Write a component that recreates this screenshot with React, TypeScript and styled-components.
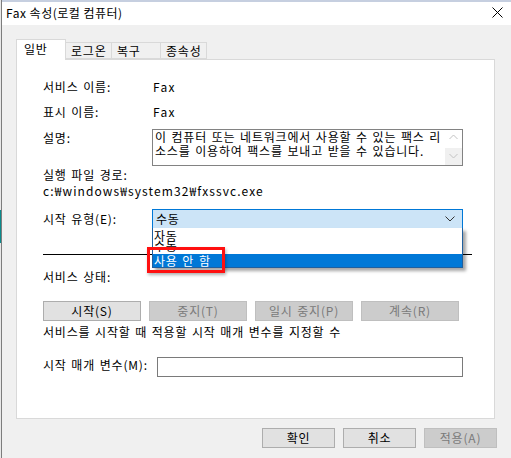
import React from "react";
import styled, { createGlobalStyle } from "styled-components";

const GlobalStyle = createGlobalStyle`
  html, body {
    margin: 0;
    padding: 0;
    background: #f0f0f0;
  }
  body {
    font-family: "Noto Sans CJK KR", "Noto Sans", sans-serif;
    font-size: 12px;
    letter-spacing: 0.8px;
    word-spacing: 1.2px;
    color: #000;
  }
`;

const font = `"Noto Sans CJK KR", "Noto Sans", sans-serif`;

export default function App() {
  return (
    <>
      <GlobalStyle />
      <Screen>
        <LeftEdge>
          <DesktopTeal />
        </LeftEdge>
        <Window>
          <TitleBar>
            <Title>Fax 속성(로컬 컴퓨터)</Title>
            <CloseButton aria-label="닫기">
              <svg width="11" height="11" viewBox="0 0 11 11">
                <path d="M0.5 0.5 L10.5 10.5 M10.5 0.5 L0.5 10.5" stroke="#000" strokeWidth="1" />
              </svg>
            </CloseButton>
          </TitleBar>

          <Body>
            <TabRow>
              <Tab $active $w={50}>일반</Tab>
              <Tab $w={46}>로그온</Tab>
              <Tab $w={49}>복구</Tab>
              <Tab $w={46}>종속성</Tab>
            </TabRow>

            <Panel>
              <FieldRow $top={20}>
                <Label>서비스 이름:</Label>
                <Value>Fax</Value>
              </FieldRow>
              <FieldRow $top={11}>
                <Label>표시 이름:</Label>
                <Value>Fax</Value>
              </FieldRow>
              <FieldRow $top={10} $start>
                <Label $offset={2}>설명:</Label>
                <DescBox>
                  <DescText>
                    이 컴퓨터 또는 네트워크에서 사용할 수 있는 팩스 리<br />
                    소스를 이용하여 팩스를 보내고 받을 수 있습니다.
                  </DescText>
                  <ScrollStrip>
                    <svg width="9" height="6" viewBox="0 0 9 6">
                      <polyline points="0.5,5 4.5,1 8.5,5" fill="none" stroke="#c2c2c2" strokeWidth="1" />
                    </svg>
                    <svg width="9" height="6" viewBox="0 0 9 6">
                      <polyline points="0.5,1 4.5,5 8.5,1" fill="none" stroke="#c2c2c2" strokeWidth="1" />
                    </svg>
                  </ScrollStrip>
                </DescBox>
              </FieldRow>
              <Line $top={2}>실행 파일 경로:</Line>
              <Line $top={2} $spacing={1.1}>c:₩windows₩system32₩fxssvc.exe</Line>

              <FieldRow $top={11} $tall>
                <Label>시작 유형(E):</Label>
                <ComboWrap>
                  <Combo>
                    <span>수동</span>
                    <svg width="10" height="6" viewBox="0 0 10 6">
                      <polyline points="0.5,0.5 5,5 9.5,0.5" fill="none" stroke="#333" strokeWidth="1" />
                    </svg>
                  </Combo>
                  <Popup>
                    <PopupItem $h={10}>자동</PopupItem>
                    <PopupItem $h={16}>수동</PopupItem>
                    <PopupItem $h={13} $selected>사용 안 함</PopupItem>
                  </Popup>
                  <Marker />
                </ComboWrap>
              </FieldRow>

              <Separator />

              <Line $top={15}>서비스 상태:</Line>

              <ButtonRow>
                <Button $w={98}>시작(S)</Button>
                <Button $w={98} disabled>중지(T)</Button>
                <Button $w={98} disabled>일시 중지(P)</Button>
                <Button $w={98} disabled>계속(R)</Button>
              </ButtonRow>

              <Line $top={4}>서비스를 시작할 때 적용할 시작 매개 변수를 지정할 수</Line>

              <FieldRow $top={18} $tall>
                <ParamLabel>시작 매개 변수(M):</ParamLabel>
                <ParamInput />
              </FieldRow>
            </Panel>

            <Footer>
              <Button $w={73}>확인</Button>
              <Button $w={73}>취소</Button>
              <Button $w={73} disabled>적용(A)</Button>
            </Footer>
          </Body>
        </Window>
      </Screen>
    </>
  );
}

const Screen = styled.div`
  display: flex;
  width: 511px;
  height: 458px;
  overflow: hidden;
`;

const LeftEdge = styled.div`
  width: 1px;
  border-right: 1px solid #7d7d7d;
  background: #e8e8e8;
  flex-shrink: 0;
`;

const DesktopTeal = styled.div`
  margin-top: 210px;
  height: 33px;
  background: #0b8a8c;
`;

const Window = styled.div`
  flex: 1;
  display: flex;
  flex-direction: column;
  background: #f0f0f0;
`;

const TitleBar = styled.div`
  height: 23px;
  border-top: 2px solid #c6cfe0;
  background: #fff;
  display: flex;
  align-items: center;
  justify-content: space-between;
  padding: 0 8px 0 4px;
`;

const Title = styled.div`
  font-family: ${font};
  font-size: 12px;
  line-height: 14px;
  letter-spacing: 0.5px;
  word-spacing: 0;
  margin-top: -1px;
`;

const CloseButton = styled.div`
  display: flex;
  align-items: center;
  margin-top: -2px;
`;

const Body = styled.div`
  flex: 1;
  padding: 14px 14px 0 14px;
  display: flex;
  flex-direction: column;
`;

const TabRow = styled.div`
  display: flex;
  align-items: flex-end;
  height: 20px;
  position: relative;
  z-index: 1;
`;

const Tab = styled.div<{ $active?: boolean; $w: number }>`
  box-sizing: border-box;
  width: ${(p) => p.$w}px;
  height: ${(p) => (p.$active ? 21 : 17)}px;
  margin-bottom: ${(p) => (p.$active ? -1 : 0)}px;
  padding-left: ${(p) => (p.$active ? 7 : 5)}px;
  border: 1px solid #d9d9d9;
  border-bottom: ${(p) => (p.$active ? "none" : "1px solid #d9d9d9")};
  border-left: ${(p) => (p.$active ? "1px solid #d9d9d9" : "none")};
  background: ${(p) => (p.$active ? "#fff" : "#f0f0f0")};
  font-size: 12px;
  line-height: ${(p) => (p.$active ? 18 : 15)}px;
  white-space: nowrap;
`;

const Panel = styled.div`
  box-sizing: border-box;
  height: 360px;
  margin-right: 2px;
  border: 1px solid #d9d9d9;
  background: #fff;
  padding-left: 26px;
  display: flex;
  flex-direction: column;
`;

const FieldRow = styled.div<{ $top: number; $start?: boolean; $tall?: boolean }>`
  display: flex;
  align-items: ${(p) => (p.$start ? "flex-start" : "center")};
  margin-top: ${(p) => p.$top}px;
  min-height: ${(p) => (p.$tall ? 20 : 14)}px;
`;

const Label = styled.div<{ $offset?: number }>`
  width: 109px;
  flex-shrink: 0;
  line-height: 14px;
  margin-top: ${(p) => p.$offset ?? 0}px;
`;

const Value = styled.div`
  line-height: 14px;
  padding-left: 1px;
  letter-spacing: 1.3px;
`;

const Line = styled.div<{ $top: number; $spacing?: number }>`
  margin-top: ${(p) => p.$top}px;
  line-height: 14px;
  white-space: nowrap;
  letter-spacing: ${(p) => p.$spacing ?? 0.8}px;
`;

const DescBox = styled.div`
  box-sizing: border-box;
  width: 311px;
  height: 37px;
  border: 1px solid #828282;
  display: flex;
  justify-content: space-between;
`;

const DescText = styled.div`
  padding-left: 2px;
  line-height: 14px;
  white-space: nowrap;
`;

const ScrollStrip = styled.div`
  width: 17px;
  flex-shrink: 0;
  display: flex;
  flex-direction: column;
  align-items: center;
  justify-content: space-between;
  padding: 4px 0 6px;
  background: linear-gradient(#ffffff 50%, #f0f0f0 50%);
`;

const ComboWrap = styled.div`
  position: relative;
  width: 311px;
`;

const Combo = styled.div`
  box-sizing: border-box;
  height: 20px;
  border: 1px solid #0078d7;
  background: #cce4f7;
  display: flex;
  align-items: center;
  justify-content: space-between;
  padding: 0 7px 0 3px;
  line-height: 14px;
`;

const Popup = styled.div`
  position: absolute;
  left: 0;
  top: 19px;
  width: 311px;
  box-sizing: border-box;
  border: 1px solid #1f5f9e;
  border-top: none;
  background: #fff;
  box-shadow: 3px 3px 3px rgba(0, 0, 0, 0.35);
  z-index: 3;
`;

const PopupItem = styled.div<{ $h: number; $selected?: boolean }>`
  height: ${(p) => p.$h}px;
  line-height: ${(p) => (p.$selected ? 13 : 16)}px;
  padding-left: 1px;
  background: ${(p) => (p.$selected ? "#0078d7" : "transparent")};
  color: ${(p) => (p.$selected ? "#fff" : "#000")};
  position: relative;
  white-space: nowrap;
`;

const Marker = styled.div`
  position: absolute;
  left: -5px;
  top: 38px;
  width: 72px;
  height: 20px;
  border: 3px solid #ff1010;
  box-shadow: 1px 2px 3px rgba(0, 0, 0, 0.3);
  z-index: 4;
`;

const Separator = styled.div`
  margin-top: 25px;
  width: 429px;
  height: 1px;
  background: #000;
`;

const ButtonRow = styled.div`
  display: flex;
  gap: 8px;
  margin-top: 17px;
`;

const Button = styled.button<{ $w: number }>`
  box-sizing: border-box;
  width: ${(p) => p.$w}px;
  height: 20px;
  padding: 0;
  border: 1px solid #adadad;
  background: #e1e1e1;
  color: #000;
  font-family: ${font};
  font-size: 12px;
  line-height: 14px;
  letter-spacing: 0.8px;
  word-spacing: 1.2px;

  &:disabled {
    border-color: #bfbfbf;
    background: #cccccc;
    color: #7a7a7a;
  }
`;

const ParamLabel = styled.div`
  width: 114px;
  flex-shrink: 0;
  line-height: 14px;
  margin-top: -4px;
`;

const ParamInput = styled.div`
  box-sizing: border-box;
  width: 306px;
  height: 20px;
  border: 1px solid #7a7a7a;
  background: #fff;
`;

const Footer = styled.div`
  display: flex;
  justify-content: flex-end;
  gap: 8px;
  margin-top: 9px;
`;
